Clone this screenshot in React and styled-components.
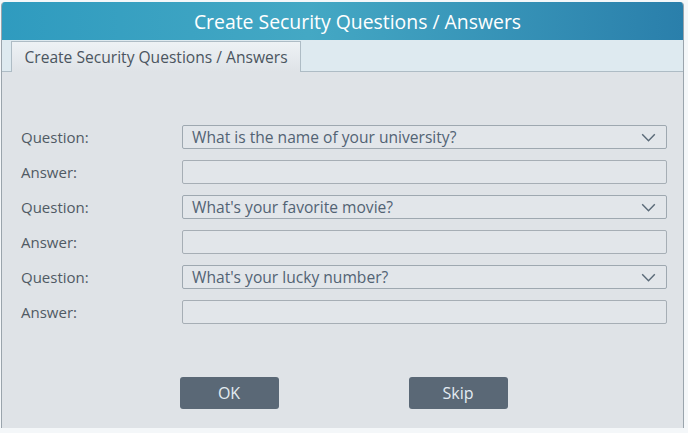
import React from 'react'
import styled, { createGlobalStyle } from 'styled-components'

const GlobalStyle = createGlobalStyle`
  html, body {
    margin: 0;
    padding: 0;
    background: #f4f7f9;
    font-family: "Open Sans", "Liberation Sans", sans-serif;
  }
`

const questions = [
  'What is the name of your university?',
  "What's your favorite movie?",
  "What's your lucky number?",
]

export default function App() {
  return (
    <>
      <GlobalStyle />
      <Page>
        <Dialog>
          <Header>Create Security Questions / Answers</Header>
          <TabStrip>
            <Tab>Create Security Questions / Answers</Tab>
          </TabStrip>
          <Body>
            <Form>
              {questions.map(q => (
                <React.Fragment key={q}>
                  <Label>Question:</Label>
                  <Select>
                    <span>{q}</span>
                    <Chevron viewBox="0 0 16 10">
                      <path d="M1 1.5 L8 8.5 L15 1.5" />
                    </Chevron>
                  </Select>
                  <Label>Answer:</Label>
                  <Input />
                </React.Fragment>
              ))}
            </Form>
            <Buttons>
              <Button>OK</Button>
              <Button>Skip</Button>
            </Buttons>
          </Body>
        </Dialog>
      </Page>
    </>
  )
}

const Page = styled.div`
  width: 688px;
  height: 433px;
  padding: 2px 4px 5px 1px;
  box-sizing: border-box;
`

const Dialog = styled.div`
  width: 683px;
  height: 426px;
  display: flex;
  flex-direction: column;
  background: #dfe3e7;
  border-left: 1px solid #9aa4ac;
  border-right: 1px solid #9aa4ac;
  border-radius: 4px 4px 0 0;
  overflow: hidden;
  box-sizing: border-box;
`

const Header = styled.div`
  height: 38px;
  flex-shrink: 0;
  display: flex;
  align-items: center;
  justify-content: center;
  padding-left: 30px;
  color: #ffffff;
  font-size: 19.4px;
  background: linear-gradient(90deg, #2f9bbf 0%, #44a8c4 45%, #2a7fab 100%);
`

const TabStrip = styled.div`
  height: 32px;
  flex-shrink: 0;
  display: flex;
  align-items: flex-end;
  padding-left: 9px;
  background: #deeaf0;
  border-bottom: 1px solid #aebcc5;
  box-sizing: border-box;
`

const Tab = styled.div`
  width: 290px;
  height: 31px;
  display: flex;
  align-items: center;
  justify-content: center;
  margin-bottom: -1px;
  color: #4b5560;
  font-size: 15.6px;
  background: linear-gradient(180deg, #eef2f5 0%, #dfe3e7 100%);
  border: 1px solid #aebcc5;
  border-bottom: none;
  box-sizing: border-box;
`

const Body = styled.div`
  flex: 1;
  display: flex;
  flex-direction: column;
  padding: 53px 16px 0 19px;
`

const Form = styled.div`
  display: grid;
  grid-template-columns: 161px 1fr;
  row-gap: 11px;
  align-items: center;
`

const Label = styled.div`
  color: #505a64;
  font-size: 15px;
`

const Select = styled.div`
  height: 24px;
  display: flex;
  align-items: center;
  justify-content: space-between;
  padding: 0 10px 0 9px;
  color: #526374;
  font-size: 15.6px;
  background: #e2e6ea;
  border: 1px solid #9ea8b0;
  border-radius: 2px;
  box-sizing: border-box;
`

const Chevron = styled.svg`
  width: 15px;
  height: 9px;
  fill: none;
  stroke: #5a6a78;
  stroke-width: 1.6;
`

const Input = styled.div`
  height: 24px;
  background: #e2e6ea;
  border: 1px solid #a6aeb5;
  border-radius: 2px;
  box-sizing: border-box;
`

const Buttons = styled.div`
  display: flex;
  justify-content: center;
  gap: 130px;
  margin-top: 53px;
  padding-right: 1px;
`

const Button = styled.div`
  width: 99px;
  height: 32px;
  display: flex;
  align-items: center;
  justify-content: center;
  color: #e4ecf2;
  font-size: 16px;
  background: #5a6876;
  border-radius: 3px;
`
